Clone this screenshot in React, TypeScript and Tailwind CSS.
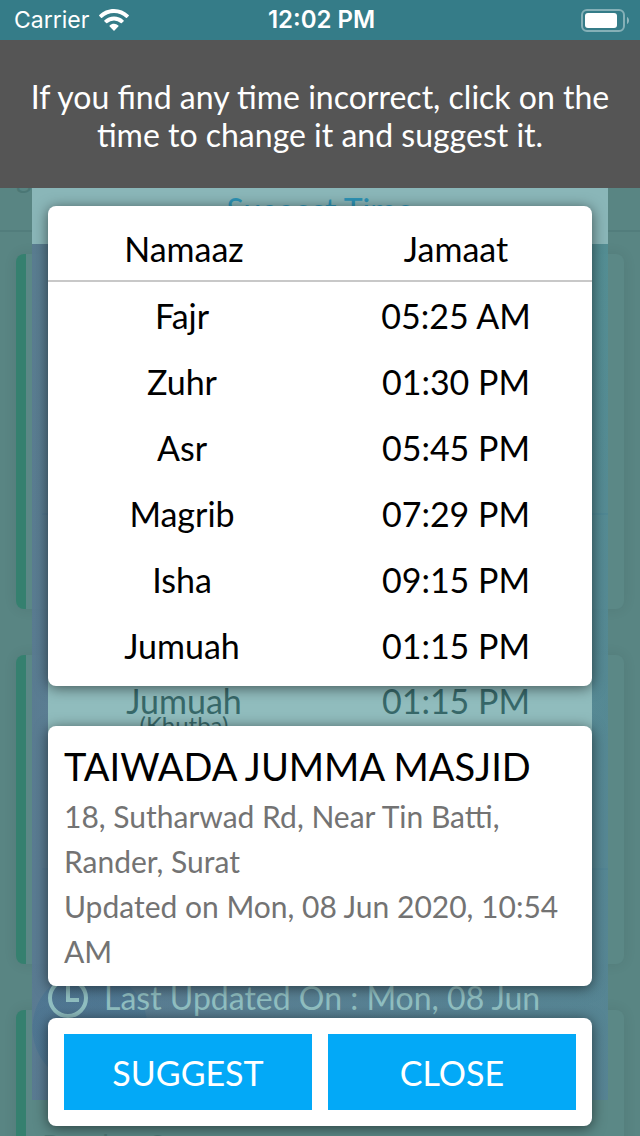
import React from "react";

const times = [
  { name: "Fajr", jamaat: "05:25 AM" },
  { name: "Zuhr", jamaat: "01:30 PM" },
  { name: "Asr", jamaat: "05:45 PM" },
  { name: "Magrib", jamaat: "07:29 PM" },
  { name: "Isha", jamaat: "09:15 PM" },
  { name: "Jumuah", jamaat: "01:15 PM" },
];

const cardShadow = "rounded-lg bg-white shadow-[0_2px_14px_rgba(0,0,0,0.55)]";
const backCard = "shrink-0 rounded-lg border-l-[10px] border-[#35806f] bg-[#5b8886] px-4 shadow-[0_0_14px_rgba(0,0,0,0.08)]";

function WifiIcon() {
  return (
    <svg viewBox="0 0 30 22" className="h-[22px] w-[30px]" fill="#fff" aria-hidden="true">
      <path d="M15 0C9.2 0 4 2.300.3 6a.8.8 0 0 0 0 1.100l1.700 1.700a.8.8 0 0 0 1.100 0A17 17 0 0 1 15 4a17 17 0 0 1 11.900 4.800.8.8 0 0 0 1.100 0l1.700-1.700a.8.8 0 0 0 0-1.100A21 21 0 0 0 15 0Z" />
      <path d="M15 7.500c-3.700 0-7 1.400-9.500 3.700a.8.8 0 0 0 0 1.200l1.700 1.700c.3.300.8.300 1.100 0a9.800 9.800 0 0 1 13.400 0c.3.300.8.300 1.100 0l1.700-1.700a.8.8 0 0 0 0-1.200A14 14 0 0 0 15 7.500Z" />
      <path d="M15 14.800c-1.700 0-3.200.6-4.300 1.600a.8.8 0 0 0 0 1.200l3.800 3.900a.7.7 0 0 0 1 0l3.800-3.900a.8.8 0 0 0 0-1.200A6.400 6.400 0 0 0 15 14.800Z" />
    </svg>
  );
}

function BatteryIcon() {
  return (
    <svg viewBox="0 0 48 23" className="h-[23px] w-12" role="img" aria-label="Battery">
      <rect x="1" y="1" width="42" height="21" rx="5" fill="none" stroke="#fff" strokeOpacity="0.4" strokeWidth="2" />
      <rect x="4" y="4" width="32" height="15" rx="3" fill="#fff" />
      <path d="M46 8c1.300.6 2 2 2 3.500s-.7 2.900-2 3.500Z" fill="#fff" fillOpacity="0.45" />
    </svg>
  );
}

function StatusBar() {
  return (
    <div className="grid h-10 grid-cols-3 items-center bg-[#357c88] pl-[14px] pr-[11px] font-['Inter',sans-serif] text-[23px] text-white">
      <div className="flex items-center gap-[10px]">
        <span>Carrier</span>
        <WifiIcon />
      </div>
      <span className="text-center text-2xl font-semibold">12:02 PM</span>
      <div className="flex justify-end">
        <BatteryIcon />
      </div>
    </div>
  );
}

// list of masjids, dimmed under the dialogs
function PageBehind() {
  return (
    <div className="absolute inset-0 flex flex-col overflow-hidden bg-[#598583] text-[#4b7775]" aria-hidden="true">
      <div className="flex h-[232px] shrink-0 flex-col justify-end border-b-2 border-[#527d7c] pb-9 pl-4 text-[30px] leading-9">g</div>
      <div className="flex flex-1 flex-col gap-[46px] px-4 pt-[22px]">
        <div className={`${backCard} h-[355px] pt-[259px]`}>
          <hr className="border-t-2 border-[#1f5f80]" />
        </div>
        <div className={`${backCard} h-[309px] pt-[213px]`}>
          <hr className="border-t-2 border-[#1f5f80]" />
        </div>
        <div className={`${backCard} h-[309px] pt-[117px] text-[30px] leading-9`}>Rander, Surat</div>
      </div>
    </div>
  );
}

// details dialog that sits between the page and the tutorial
function DialogBehind() {
  return (
    <div className="absolute inset-0 flex flex-col overflow-hidden px-8 pb-9 pt-[164px]" aria-hidden="true">
      <div className="h-20 shrink-0 bg-[#8ab6b8] pt-[22px] text-center text-[32px] leading-[48px] text-[#2d93b5]">
        Suggest Time
      </div>
      <div className="flex flex-1 flex-col bg-[radial-gradient(circle_at_58px_calc(100%-72px),rgba(60,110,145,0.35)_57px,transparent_58px),linear-gradient(to_bottom,transparent,rgba(90,120,148,0.45)),linear-gradient(to_right,rgba(90,124,146,0.9),rgba(83,143,149,0.9))] px-4">
        <div className="mt-[396px] grid h-[106px] shrink-0 grid-cols-2 bg-[#90bcbd] pt-[45px] text-center text-[34px] leading-8 text-[#376869]">
          <div>
            <p>Jumuah</p>
            <p className="text-2xl leading-4">(Khutba)</p>
          </div>
          <p>01:15 PM</p>
        </div>
        <div className="mt-[230px] flex h-11 shrink-0 items-center gap-4 text-[32px] text-[#90bfc1]">
          <svg viewBox="0 0 40 40" className="size-10" fill="none" stroke="#90bfc1" strokeWidth="4">
            <circle cx="20" cy="20" r="18" />
            <path d="M20 8v14h11" />
          </svg>
          <span>Last Updated On : Mon, 08 Jun</span>
        </div>
      </div>
    </div>
  );
}

export default function App() {
  return (
    <div className="relative min-h-screen font-['Lato',sans-serif] text-black">
      <PageBehind />
      <DialogBehind />

      <div className="relative flex min-h-screen flex-col">
        <StatusBar />
        <p className="bg-[#555] px-6 pb-[34px] pt-[38px] text-center text-[32px] leading-[38px] text-white">
          If you find any time incorrect, click on the time to change it and suggest it.
        </p>

        <main className="flex flex-col px-12 pb-[10px] pt-[18px]">
          {/* timings */}
          <section className={`${cardShadow} pb-2`}>
            <table className="w-full table-fixed border-separate border-spacing-0 text-center text-[34px]">
              <thead>
                <tr className="h-[76px]">
                  <th className="border-b-2 border-[#c8c8c8] p-0 pt-[10px] font-normal">Namaaz</th>
                  <th className="border-b-2 border-[#c8c8c8] p-0 pt-[10px] font-normal">Jamaat</th>
                </tr>
              </thead>
              <tbody>
                {times.map((t) => (
                  <tr key={t.name} className="h-[66px]">
                    <td className="p-0 pr-1">{t.name}</td>
                    <td className="p-0">
                      <button type="button">{t.jamaat}</button>
                    </td>
                  </tr>
                ))}
              </tbody>
            </table>
          </section>

          {/* masjid info */}
          <section className={`${cardShadow} mt-10 px-4 pb-3 pt-[14px]`}>
            <h1 className="mb-[2px] text-[38px] leading-[52px]">TAIWADA JUMMA MASJID</h1>
            <p className="text-[30px] leading-[45px] text-[#737373]">
              18, Sutharwad Rd, Near Tin Batti, Rander, Surat
              <br />
              Updated on Mon, 08 Jun 2020, 10:54 AM
            </p>
          </section>

          {/* actions */}
          <section className={`${cardShadow} mt-8 grid grid-cols-2 gap-4 p-4`}>
            <button type="button" className="h-[76px] bg-[#03a9f7] text-[34px] text-white">SUGGEST</button>
            <button type="button" className="h-[76px] bg-[#03a9f7] text-[34px] text-white">CLOSE</button>
          </section>
        </main>
      </div>
    </div>
  );
}
